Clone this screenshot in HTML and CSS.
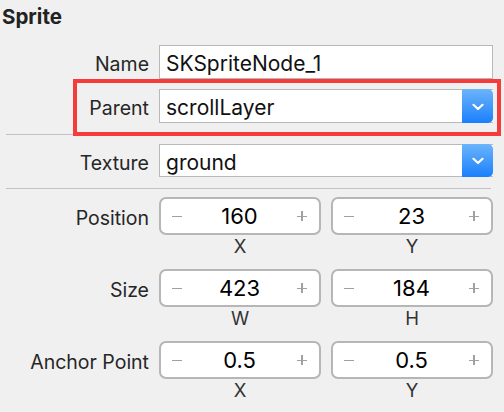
FILE: index.html
```html
<!DOCTYPE html>
<html>
<head>
<meta charset="utf-8">
<link rel="stylesheet" href="styles.css">
</head>
<body>
<div class="panel">
  <div class="title">Sprite</div>

  <div class="row row-name">
    <div class="label">Name</div>
    <div class="field"><span class="value">SKSpriteNode_1</span></div>
  </div>

  <div class="row row-parent">
    <div class="label">Parent</div>
    <div class="field select">
      <span class="value">scrollLayer</span>
      <span class="popup-btn"><svg width="12" height="8" viewBox="0 0 12 8"><path d="M1.5 1.8 L6 6 L10.5 1.8" fill="none" stroke="#fff" stroke-width="2.2" stroke-linecap="round" stroke-linejoin="round"/></svg></span>
    </div>
    <span class="annot"></span>
  </div>

  <div class="sep sep-1"></div>

  <div class="row row-texture">
    <div class="label">Texture</div>
    <div class="field select">
      <span class="value">ground</span>
      <span class="popup-btn"><svg width="12" height="8" viewBox="0 0 12 8"><path d="M1.5 1.8 L6 6 L10.5 1.8" fill="none" stroke="#fff" stroke-width="2.2" stroke-linecap="round" stroke-linejoin="round"/></svg></span>
    </div>
  </div>

  <div class="sep sep-2"></div>

  <div class="row stepper-row">
    <div class="label">Position</div>
    <div class="pair">
      <div class="group">
        <div class="stepper"><span class="minus"></span><span class="num">160</span><span class="plus"></span></div>
        <div class="sub">X</div>
      </div>
      <div class="group">
        <div class="stepper"><span class="minus"></span><span class="num">23</span><span class="plus"></span></div>
        <div class="sub">Y</div>
      </div>
    </div>
  </div>

  <div class="row stepper-row">
    <div class="label">Size</div>
    <div class="pair">
      <div class="group">
        <div class="stepper"><span class="minus"></span><span class="num">423</span><span class="plus"></span></div>
        <div class="sub">W</div>
      </div>
      <div class="group">
        <div class="stepper"><span class="minus"></span><span class="num">184</span><span class="plus"></span></div>
        <div class="sub">H</div>
      </div>
    </div>
  </div>

  <div class="row stepper-row">
    <div class="label">Anchor Point</div>
    <div class="pair">
      <div class="group">
        <div class="stepper"><span class="minus"></span><span class="num">0.5</span><span class="plus"></span></div>
        <div class="sub">X</div>
      </div>
      <div class="group">
        <div class="stepper"><span class="minus"></span><span class="num">0.5</span><span class="plus"></span></div>
        <div class="sub">Y</div>
      </div>
    </div>
  </div>
</div>
</body>
</html>
```

FILE: styles.css
```css
* { box-sizing: border-box; }

html, body {
  margin: 0;
  padding: 0;
  background: #f0f0f0;
  width: 504px;
  height: 412px;
  overflow: hidden;
}

body {
  font-family: Inter, "Noto Sans", sans-serif;
  color: #262626;
}

.panel {
  padding-top: 5px;
}

.title {
  font-weight: 700;
  font-size: 20.5px;
  line-height: 24px;
  padding-left: 2px;
  color: #222;
}

.row {
  display: grid;
  grid-template-columns: 149px 334px;
  column-gap: 10px;
  align-items: center;
  position: relative;
}

.row-name { margin-top: 16px; }
.row-parent { margin-top: 10px; }
.row-texture { margin-top: 9px; }

.label {
  text-align: right;
  font-size: 19.5px;
  padding-top: 4px;
  white-space: nowrap;
  color: #262626;
}

.field {
  height: 34px;
  background: #fff;
  border: 1px solid #b9b9b9;
  display: flex;
  align-items: center;
  padding: 3px 0 0 6px;
  font-size: 21px;
  color: #111;
}

.row-texture .field { height: 33px; }

.field.select {
  padding-right: 0;
  border-right: none;
  justify-content: space-between;
}

.value { flex: 1; }

.popup-btn {
  align-self: stretch;
  margin: -4px 0 -1px 0;
  width: 31px;
  border-radius: 0 5px 5px 0;
  background: linear-gradient(#6cb4fb, #1a80fb);
  display: flex;
  align-items: center;
  justify-content: center;
}

.popup-btn svg { display: block; margin-top: 1px; }

.annot {
  position: absolute;
  left: 73px;
  top: -10px;
  right: 3px;
  bottom: -13px;
  border: 4px solid #f63c3a;
  pointer-events: none;
}

.sep {
  height: 1px;
  background: #c2c2c2;
  margin-left: 6px;
  width: 485px;
}

.sep-1 { margin-top: 11px; }
.sep-2 { margin-top: 11px; }

.stepper-row {
  align-items: start;
}

.sep-2 + .stepper-row { margin-top: 8px; }

.stepper-row .label {
  padding-top: 0;
  line-height: 38px;
  margin-top: 2px;
}

.pair {
  display: grid;
  grid-template-columns: 1fr 1fr;
  column-gap: 10px;
}

.group {
  display: flex;
  flex-direction: column;
  padding-bottom: 12px;
}

.stepper {
  height: 38px;
  background: #fff;
  border: 2px solid #b6b6b6;
  border-radius: 7px;
  display: flex;
  align-items: center;
  justify-content: space-between;
  padding: 0 12px 0 11px;
}

.num {
  font-size: 22px;
  color: #000;
}

.minus, .plus {
  width: 10px;
  height: 10px;
  position: relative;
}

.minus::before, .plus::before, .plus::after {
  content: "";
  position: absolute;
  background: #a0a0a0;
}

.minus::before, .plus::before {
  left: 0;
  top: 4.5px;
  width: 10px;
  height: 1.5px;
}

.plus::after {
  left: 4.25px;
  top: 0;
  width: 1.5px;
  height: 10px;
}

.sub {
  text-align: center;
  font-size: 18.5px;
  line-height: 22px;
  color: #333;
}
```
